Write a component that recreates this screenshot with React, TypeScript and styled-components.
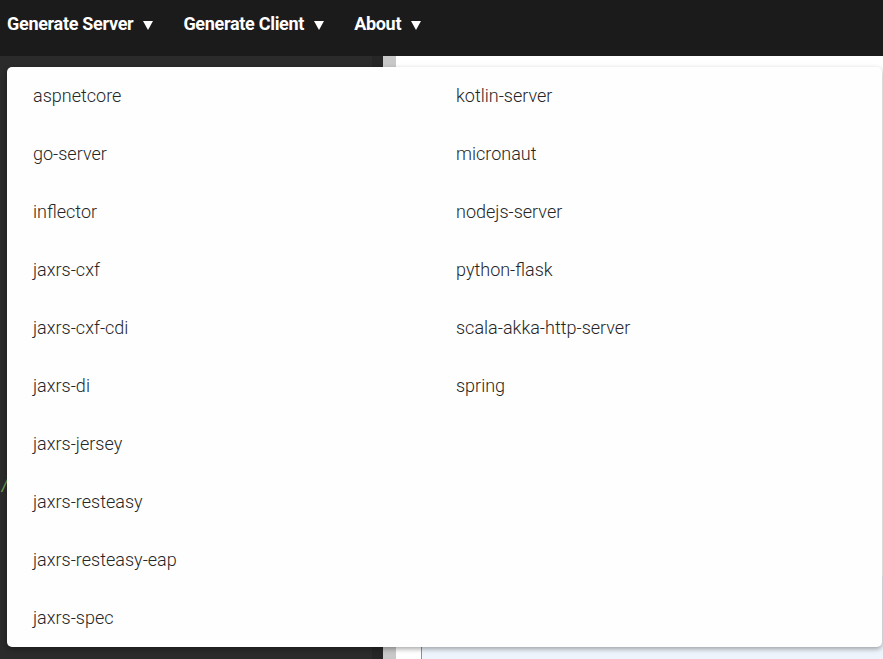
import React from 'react';
import styled, { createGlobalStyle } from 'styled-components';

const GlobalStyle = createGlobalStyle`
  html, body {
    margin: 0;
    padding: 0;
    background: #2b2b2b;
    font-family: Roboto, 'Liberation Sans', sans-serif;
  }
  * {
    box-sizing: border-box;
  }
`;

const Page = styled.div`
  position: relative;
  width: 883px;
  height: 659px;
  overflow: hidden;
  display: flex;
  flex-direction: column;
`;

const TopBar = styled.nav`
  height: 56px;
  background-color: #1b1b1b;
  display: flex;
  align-items: center;
  padding: 0 0 9px 7px;
  gap: 30px;
`;

const NavItem = styled.div`
  display: flex;
  align-items: center;
  gap: 10px;
  color: #ffffff;
  font-weight: 700;
  font-size: 18px;
  letter-spacing: -0.3px;
  cursor: pointer;
`;

const Caret = styled.span`
  width: 0;
  height: 0;
  margin-top: 4px;
  border-left: 5px solid transparent;
  border-right: 5px solid transparent;
  border-top: 9px solid #ffffff;
`;

const Workspace = styled.div`
  flex: 1;
  display: flex;
`;

const Editor = styled.div`
  position: relative;
  width: 372px;
  background-color: #2b2b2b;
`;

const CodeMark = styled.span`
  position: absolute;
  left: 0;
  top: 420px;
  color: #6a9955;
  font-family: 'DejaVu Sans Mono', monospace;
  font-size: 16px;
`;

const Gutter = styled.div`
  width: 11px;
  background-color: #262626;
`;

const ScrollBar = styled.div`
  width: 13px;
  background-color: #c8c8c8;
`;

const Preview = styled.div`
  flex: 1;
  display: flex;
  background-color: #ffffff;
  padding-left: 25px;
`;

const PreviewPanel = styled.div`
  flex: 1;
  margin-top: 520px;
  border-left: 1px solid #5b9bdf;
  background-color: #eef4fc;
`;

const Dropdown = styled.div`
  position: absolute;
  top: 67px;
  left: 7px;
  width: 875px;
  background-color: #fefefe;
  border-radius: 5px;
  box-shadow: 0 2px 5px rgba(0, 0, 0, 0.35);
  display: grid;
  grid-template-columns: 423px 1fr;
`;

const Column = styled.ul`
  list-style: none;
  margin: 0;
  padding: 0;
`;

const MenuItem = styled.li`
  height: 58px;
  display: flex;
  align-items: center;
  padding: 0 26px 1px;
  color: #262626;
  font-weight: 300;
  font-size: 18px;
  cursor: pointer;
`;

const leftItems = [
  'aspnetcore',
  'go-server',
  'inflector',
  'jaxrs-cxf',
  'jaxrs-cxf-cdi',
  'jaxrs-di',
  'jaxrs-jersey',
  'jaxrs-resteasy',
  'jaxrs-resteasy-eap',
  'jaxrs-spec',
];

const rightItems = [
  'kotlin-server',
  'micronaut',
  'nodejs-server',
  'python-flask',
  'scala-akka-http-server',
  'spring',
];

const menus = ['Generate Server', 'Generate Client', 'About'];

const App: React.FC = () => {
  return (
    <>
      <GlobalStyle />
      <Page>
        <TopBar>
          {menus.map((m) => (
            <NavItem key={m}>
              {m}
              <Caret />
            </NavItem>
          ))}
        </TopBar>
        <Workspace>
          <Editor>
            <CodeMark>/</CodeMark>
          </Editor>
          <Gutter />
          <ScrollBar />
          <Preview>
            <PreviewPanel />
          </Preview>
        </Workspace>
        <Dropdown>
          <Column>
            {leftItems.map((item) => (
              <MenuItem key={item}>{item}</MenuItem>
            ))}
          </Column>
          <Column>
            {rightItems.map((item) => (
              <MenuItem key={item}>{item}</MenuItem>
            ))}
          </Column>
        </Dropdown>
      </Page>
    </>
  );
};

export default App;
